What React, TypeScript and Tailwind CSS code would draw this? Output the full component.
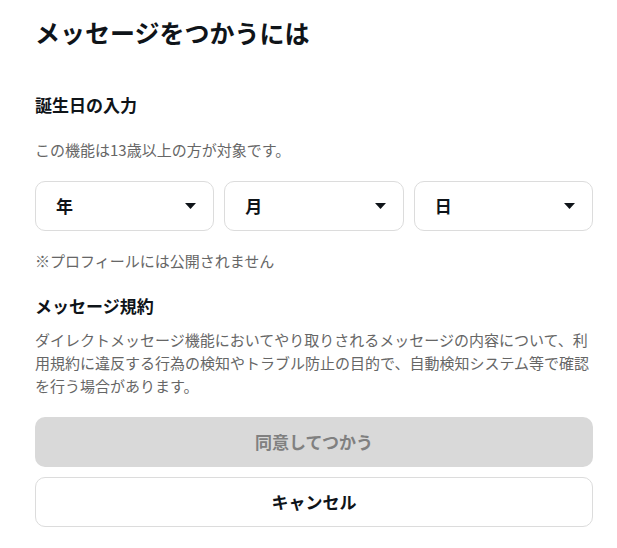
import React, { useState } from 'react';

const font = { fontFamily: '"Noto Sans CJK JP", "Noto Sans", sans-serif' };

type SelectProps = { label: string };

const DateSelect: React.FC<SelectProps> = ({ label }) => (
    <button
        type="button"
        className="flex h-[50px] flex-1 items-center justify-between rounded-[10px] border border-[#dcdcdc] bg-white pl-[20px] pr-[17px]"
    >
        <span className="text-[17px] font-bold text-[#0f1419]">{label}</span>
        <svg width="11" height="6" viewBox="0 0 11 6" className="fill-[#0f1419]">
            <path d="M0 0h11L5.5 6z" />
        </svg>
    </button>
);

export default function App() {
    const [agreed] = useState(false);

    return (
        <div className="h-screen overflow-hidden bg-white pl-[35px] pr-[24px] pt-[14px] text-[#0f1419]" style={font}>
            <h1 className="text-[25px] font-bold leading-[36px]">メッセージをつかうには</h1>

            <h2 className="mt-[43px] text-[17px] font-bold leading-[24px]">誕生日の入力</h2>
            <p className="mt-[23px] text-[15px] leading-[20px] text-[#666]">この機能は13歳以上の方が対象です。</p>

            <div className="mt-[21px] flex gap-[10px]">
                <DateSelect label="年" />
                <DateSelect label="月" />
                <DateSelect label="日" />
            </div>

            <p className="mt-[20px] text-[15px] leading-[20px] text-[#666]">※プロフィールには公開されません</p>

            <h2 className="mt-[23px] text-[17px] font-bold leading-[24px]">メッセージ規約</h2>
            <p className="mt-[10px] text-[15px] leading-[23px] text-[#666]">
                ダイレクトメッセージ機能においてやり取りされるメッセージの内容について、利用規約に違反する行為の検知やトラブル防止の目的で、自動検知システム等で確認を行う場合があります。
            </p>

            <div className="mt-[20px] flex flex-col gap-[10px]">
                <button
                    type="button"
                    disabled={!agreed}
                    className="h-[50px] w-full rounded-[10px] bg-[#d9d9d9] text-[17px] font-bold text-[#808080]"
                >
                    同意してつかう
                </button>
                <button
                    type="button"
                    className="h-[50px] w-full rounded-[10px] border border-[#dcdcdc] bg-white text-[17px] font-bold text-[#0f1419]"
                >
                    キャンセル
                </button>
            </div>
        </div>
    );
}
